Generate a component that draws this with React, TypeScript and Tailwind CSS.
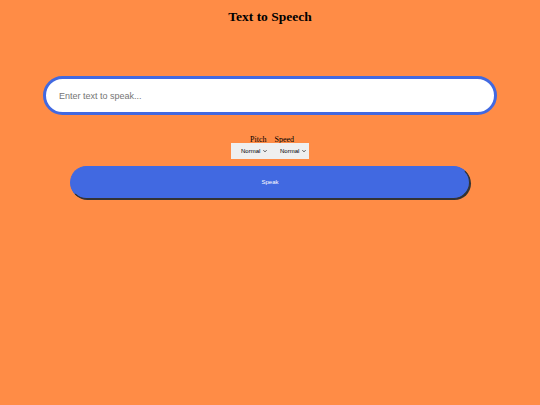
import React, { useState } from 'react';

function SmallSelect() {
  return (
    <div className="relative h-[16px] w-[39px] bg-[#efefef]">
      <select className="block h-[16px] w-full appearance-none bg-transparent py-0 pl-[10px] font-['Liberation_Sans',sans-serif] text-[6px] leading-[16px] text-black outline-none">
        <option>Normal</option>
        <option>Slow</option>
        <option>Fast</option>
      </select>
      <svg
        viewBox="0 0 10 10"
        className="pointer-events-none absolute right-[3px] top-[6px] h-[4px] w-[4px]"
        fill="none"
        stroke="#222"
        strokeWidth="2"
      >
        <path d="M1 3l4 4 4-4" />
      </svg>
    </div>
  );
}

export default function App() {
  const [text, setText] = useState('');

  return (
    <div className="min-h-[405px] w-full bg-[#ff8c46] font-['Liberation_Serif',serif] text-black">
      <h1 className="pt-[10px] text-center text-[13.5px] font-bold leading-[14px]">Text to Speech</h1>

      {/* Input */}
      <div className="mt-[52px] px-[43px]">
        <input
          value={text}
          onChange={(e) => setText(e.target.value)}
          placeholder="Enter text to speak..."
          className="block h-[39px] w-full rounded-full border-[3px] border-[#4169e1] bg-white px-[13px] font-['Liberation_Sans',sans-serif] text-[9px] text-black outline-none placeholder:text-[#757575]"
        />
      </div>

      {/* Pitch / Speed */}
      <div className="mt-[21px] flex justify-center gap-[8px] pl-[4px] text-[8px] leading-[8px]">
        <span>Pitch</span>
        <span>Speed</span>
      </div>
      <div className="-mt-[1px] flex justify-center">
        <SmallSelect />
        <SmallSelect />
      </div>

      {/* Speak button */}
      <div className="mt-[7px] px-[70px]">
        <button className="block h-[33px] w-full rounded-full border border-[#333] border-l-[#4169e1] border-t-[#4169e1] bg-[#4169e1] font-['Liberation_Sans',sans-serif] text-[6px] text-white shadow-[1px_1px_0_#333]">
          Speak
        </button>
      </div>
    </div>
  );
}
